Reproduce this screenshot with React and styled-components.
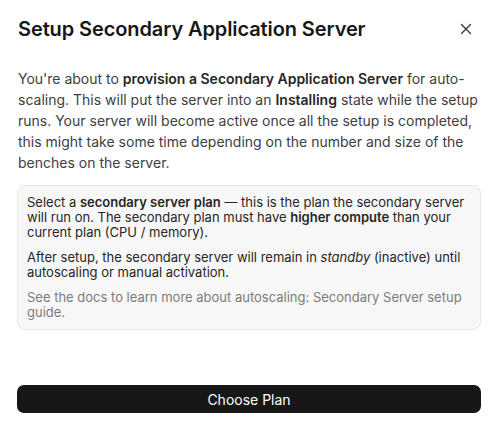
import React from "react";
import styled, { createGlobalStyle } from "styled-components";

const GlobalStyles = createGlobalStyle`
  html, body {
    margin: 0;
    padding: 0;
    background: #fff;
  }
  body {
    font-family: Inter, "Noto Sans", sans-serif;
    -webkit-font-smoothing: antialiased;
  }
`;

const Dialog = styled.div`
  width: 498px;
  height: 437px;
  box-sizing: border-box;
  padding: 15px 17px 24px;
  display: flex;
  flex-direction: column;
`;

const Header = styled.div`
  display: flex;
  align-items: center;
  justify-content: space-between;
  height: 28px;
`;

const Title = styled.h2`
  margin: 0 0 0 1px;
  font-size: 20px;
  font-weight: 600;
  line-height: 28px;
  color: #171717;
  letter-spacing: -0.1px;
`;

const CloseButton = styled.button`
  border: none;
  background: none;
  padding: 0;
  width: 28px;
  height: 28px;
  display: flex;
  align-items: center;
  justify-content: center;
  color: #333;
  margin-right: 1px;
  cursor: pointer;
`;

const Intro = styled.p`
  margin: 25px 0 0 1px;
  font-size: 14px;
  line-height: 21px;
  color: #404040;

  b {
    font-weight: 600;
    color: #262626;
  }
`;

const Notice = styled.div`
  margin-top: 12px;
  border: 1px solid #e8e8e8;
  background: #f7f7f7;
  border-radius: 8px;
  padding: 9px;
  display: flex;
  flex-direction: column;
  gap: 10px;
`;

const NoticeText = styled.p`
  margin: 0;
  font-size: 13px;
  line-height: 15px;
  color: ${(p) => (p.$muted ? "#7c7c7c" : "#262626")};

  b {
    font-weight: 600;
  }
`;

const Footer = styled.div`
  margin-top: auto;
`;

const PrimaryButton = styled.button`
  width: 100%;
  height: 28px;
  border: none;
  border-radius: 7px;
  background: #171717;
  color: #fff;
  font-family: Inter, "Noto Sans", sans-serif;
  font-size: 14px;
  cursor: pointer;
`;

const CloseIcon = () => (
  <svg width="16" height="16" viewBox="0 0 16 16" fill="none">
    <path d="M3.5 3.5l9 9M12.5 3.5l-9 9" stroke="currentColor" strokeWidth="1.3" strokeLinecap="round" />
  </svg>
);

export default function App() {
  return (
    <>
      <GlobalStyles />
      <Dialog>
        <Header>
          <Title>Setup Secondary Application Server</Title>
          <CloseButton aria-label="Close">
            <CloseIcon />
          </CloseButton>
        </Header>
        <Intro>
          You're about to <b>provision a Secondary Application Server</b> for auto-scaling. This will put the server
          into an <b>Installing</b> state while the setup runs. Your server will become active once all the setup is
          completed, this might take some time depending on the number and size of the benches on the server.
        </Intro>
        <Notice>
          <NoticeText>
            Select a <b>secondary server plan</b> — this is the plan the secondary server will run on. The secondary
            plan must have <b>higher compute</b> than your current plan (CPU / memory).
          </NoticeText>
          <NoticeText>
            After setup, the secondary server will remain in <i>standby</i> (inactive) until autoscaling or manual
            activation.
          </NoticeText>
          <NoticeText $muted>
            See the docs to learn more about autoscaling: Secondary Server setup guide.
          </NoticeText>
        </Notice>
        <Footer>
          <PrimaryButton>Choose Plan</PrimaryButton>
        </Footer>
      </Dialog>
    </>
  );
}
